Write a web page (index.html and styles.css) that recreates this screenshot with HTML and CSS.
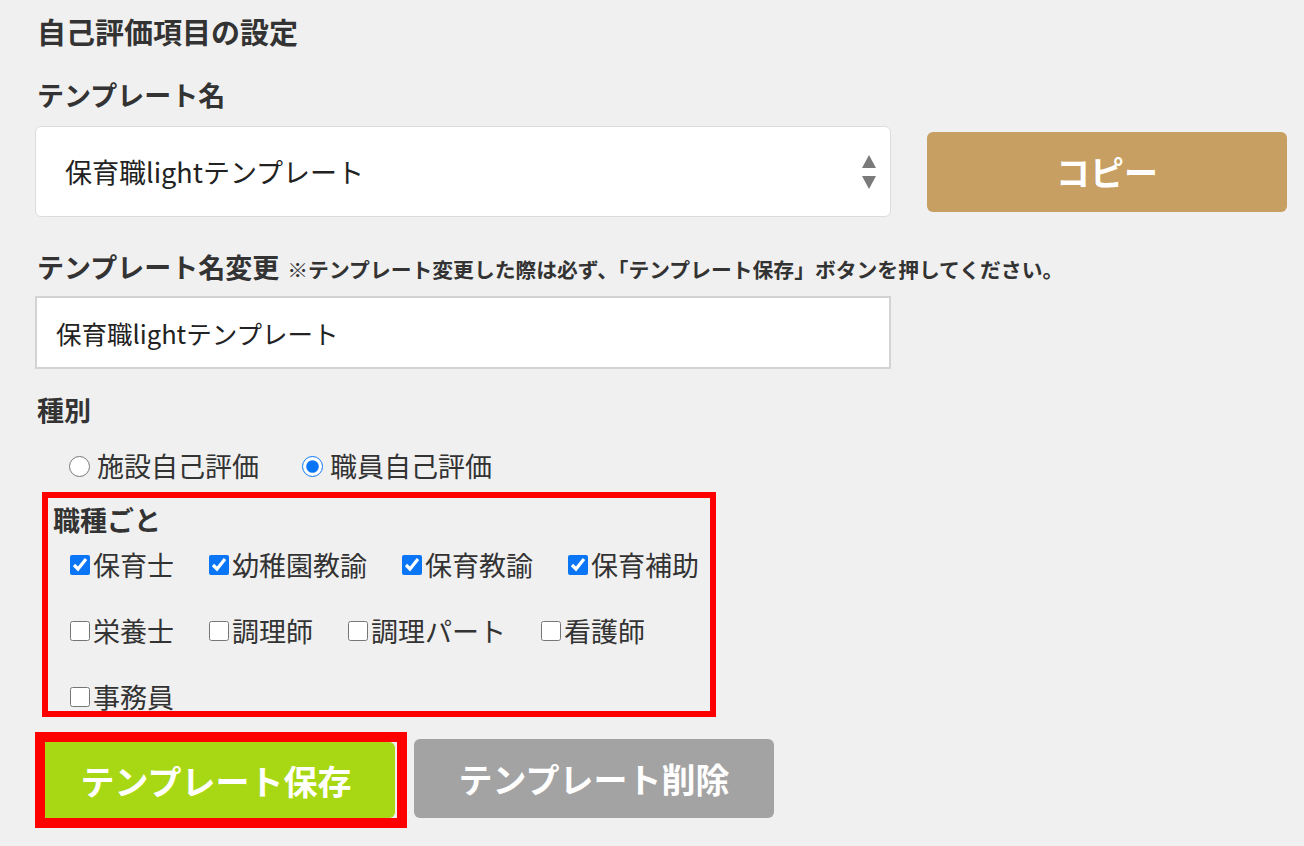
FILE: index.html
```html
<!DOCTYPE html>
<html lang="ja">
<head>
<meta charset="utf-8">
<title>自己評価項目の設定</title>
<link rel="stylesheet" href="styles.css">
</head>
<body>
<div class="wrap">
  <h1 class="title">自己評価項目の設定</h1>

  <h2 class="label">テンプレート名</h2>
  <div class="select-row">
    <div class="select">
      <span class="select-text">保育職lightテンプレート</span>
      <svg class="arrows" width="16" height="34" viewBox="0 0 16 34">
        <path d="M8 0 L15 13 L1 13 Z" fill="#7a7a7a"/>
        <path d="M1 21 L15 21 L8 34 Z" fill="#7a7a7a"/>
      </svg>
    </div>
    <button class="btn btn-copy">コピー</button>
  </div>

  <h2 class="label label-rename">テンプレート名変更 <span class="note">※テンプレート変更した際は必ず、「テンプレート保存」ボタンを押してください。</span></h2>
  <input class="text-input" type="text" value="保育職lightテンプレート">

  <h2 class="label label-kind">種別</h2>
  <div class="radios">
    <label class="radio"><input type="radio" name="kind">施設自己評価</label>
    <label class="radio"><input type="radio" name="kind" checked>職員自己評価</label>
  </div>

  <div class="jobs">
    <h3 class="jobs-title">職種ごと</h3>
    <div class="checks">
      <label class="check"><input type="checkbox" checked>保育士</label>
      <label class="check"><input type="checkbox" checked>幼稚園教諭</label>
      <label class="check"><input type="checkbox" checked>保育教諭</label>
      <label class="check"><input type="checkbox" checked>保育補助</label>
      <label class="check"><input type="checkbox">栄養士</label>
      <label class="check"><input type="checkbox">調理師</label>
      <label class="check"><input type="checkbox">調理パート</label>
      <label class="check"><input type="checkbox">看護師</label>
      <label class="check"><input type="checkbox">事務員</label>
    </div>
  </div>

  <div class="actions">
    <div class="save-frame">
      <button class="btn btn-save">テンプレート保存</button>
    </div>
    <button class="btn btn-delete">テンプレート削除</button>
  </div>
</div>
</body>
</html>
```

FILE: styles.css
```css
html, body {
  margin: 0;
  padding: 0;
  background: #f0f0f0;
}

body {
  font-family: "Noto Sans CJK JP", "Noto Sans", sans-serif;
  color: #333333;
}

.wrap {
  padding: 11px 0 0 35px;
}

.title {
  margin: 0;
  font-size: 29px;
  line-height: 40px;
  font-weight: 700;
  padding-left: 2px;
}

.label {
  margin: 24px 0 11px;
  font-size: 27px;
  line-height: 40px;
  height: 40px;
  font-weight: 700;
  padding-left: 2px;
  white-space: nowrap;
}

.label-rename {
  margin-top: 30px;
  margin-bottom: 9px;
}

.note {
  font-size: 20.8px;
  line-height: 20px;
  font-weight: 700;
  margin-left: 2px;
  vertical-align: baseline;
}

.label-kind {
  margin-top: 21px;
  margin-bottom: 0;
}

.select-row {
  display: flex;
  align-items: center;
  gap: 36px;
}

.select {
  box-sizing: border-box;
  width: 856px;
  height: 91px;
  background: #ffffff;
  border: 1px solid #dcdcdc;
  border-radius: 6px;
  display: flex;
  align-items: center;
  justify-content: space-between;
  padding: 0 13px 0 29px;
}

.select-text {
  font-size: 27px;
  color: #222222;
}

.arrows {
  display: block;
}

.btn {
  font-family: "Noto Sans CJK JP", "Noto Sans", sans-serif;
  font-size: 34px;
  font-weight: 700;
  color: #ffffff;
  border: none;
  border-radius: 6px;
  cursor: pointer;
  padding: 0;
}

.btn-copy {
  width: 360px;
  height: 80px;
  background: #c89f62;
}

.text-input {
  display: block;
  box-sizing: border-box;
  width: 856px;
  height: 73px;
  margin: 0;
  padding: 0 0 0 19px;
  background: #ffffff;
  border: 2px solid #d3d3d3;
  border-radius: 0;
  font-family: "Noto Sans CJK JP", "Noto Sans", sans-serif;
  font-size: 25.5px;
  color: #222222;
  outline: none;
}

.radios {
  display: flex;
  align-items: center;
  gap: 43px;
  margin-top: 16px;
  padding-left: 34px;
  height: 40px;
}

.radio {
  display: flex;
  align-items: center;
  font-size: 27px;
  line-height: 40px;
  color: #333333;
}

.radio input {
  width: 21px;
  height: 21px;
  margin: 0 7px 0 0;
  accent-color: #0a75f5;
}

.jobs {
  box-sizing: border-box;
  width: 674px;
  margin: 6px 0 0 7px;
  border: 6px solid #ff0000;
  padding: 7px 0 0 5px;
  height: 225px;
}

.jobs-title {
  margin: 0;
  font-size: 27px;
  line-height: 30px;
  font-weight: 700;
}

.checks {
  display: flex;
  flex-wrap: wrap;
  column-gap: 35px;
  row-gap: 36px;
  margin-top: 15px;
  padding-left: 17px;
  width: 640px;
}

.check {
  display: flex;
  align-items: center;
  font-size: 27px;
  line-height: 30px;
  color: #333333;
}

.check input {
  width: 20px;
  height: 20px;
  margin: 0 3px 0 0;
  accent-color: #0a75f5;
}

.actions {
  display: flex;
  align-items: flex-start;
  gap: 7px;
  margin-top: 15px;
}

.save-frame {
  display: flex;
  border: 10px solid #ff0000;
}

.btn-save {
  display: block;
  box-sizing: border-box;
  width: 350px;
  height: 76px;
  margin-right: 2px;
  padding-right: 8px;
  background: #a8d813;
  border-radius: 0 6px 6px 0;
}

.btn-delete {
  width: 360px;
  height: 79px;
  margin-top: 7px;
  background: #a3a3a3;
}
```
